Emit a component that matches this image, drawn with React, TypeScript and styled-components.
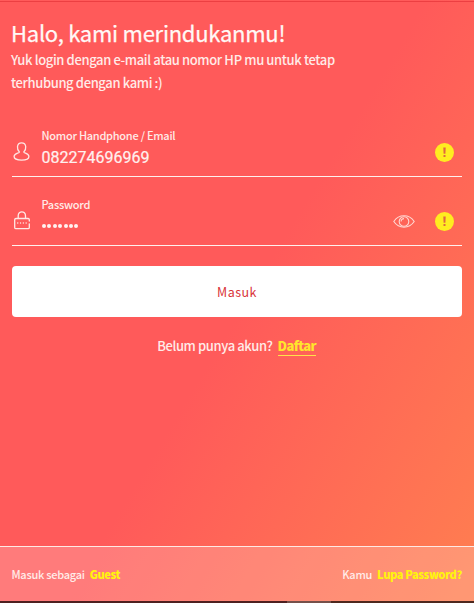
import React from 'react';
import styled, { createGlobalStyle } from 'styled-components';

const GlobalStyle = createGlobalStyle`
  * { box-sizing: border-box; }
  body { margin: 0; overflow: hidden; }
`;

const Screen = styled.div`
  width: 474px;
  height: 603px;
  display: flex;
  flex-direction: column;
  color: #ffebe8;
  font-family: "Noto Sans CJK SC", "Noto Sans", sans-serif;
  background: linear-gradient(121deg, #ff5a5a 0%, #ff5a5a 51%, #ff7f50 100%);
`;

const TopEdge = styled.div`
  height: 2px;
  flex: none;
  border-bottom: 1px solid #ec3f42;
`;

const Content = styled.main`
  flex: 1;
  padding: 16px 12px 0;
`;

const Title = styled.h1`
  margin: 0 0 1px -1px;
  font-size: 22px;
  line-height: 29px;
  font-weight: 400;
  letter-spacing: -0.26px;
  color: #fff8f6;
  -webkit-text-stroke: 0.25px #fff8f6;
  white-space: nowrap;
`;

const Intro = styled.p`
  margin: 0 0 14px -1px;
  font-size: 13px;
  line-height: 23px;
  font-weight: 500;
  letter-spacing: -0.37px;
  white-space: nowrap;
`;

const Field = styled.div`
  height: 69px;
  display: flex;
  align-items: flex-start;
  padding-top: 18px;
  border-bottom: 1px solid #fff0ee;
`;

const FieldIcon = styled.div`
  width: 29.5px;
  height: 22px;
  margin-top: 15px;
  flex: none;
`;

const FieldBody = styled.div`
  flex: 1;
  display: flex;
  flex-direction: column;
`;

const Label = styled.label`
  font-size: 11px;
  line-height: 18px;
  font-weight: 500;
  letter-spacing: -0.26px;
`;

const Phone = styled.div`
  font-family: Roboto, sans-serif;
  font-size: 16px;
  line-height: 22px;
  padding-top: 3px;
  color: #fff1ef;
  -webkit-text-stroke: 0.2px #fff1ef;
`;

const Dots = styled.div`
  display: flex;
  gap: 1.4px;
  padding: 11px 0 0 0.5px;
`;

const Dot = styled.span`
  width: 4px;
  height: 4px;
  border-radius: 50%;
  background: #fff3f1;
`;

const Actions = styled.div`
  display: flex;
  align-items: center;
  gap: 20px;
  padding: 16px 8px 0 0;
`;

const Submit = styled.button`
  display: block;
  width: 450px;
  height: 51px;
  margin: 20px 0 0;
  padding: 0;
  border: 0;
  border-radius: 4px;
  background: #fff;
  color: #d93338;
  font-family: inherit;
  font-size: 12.5px;
  line-height: 50px;
  letter-spacing: 0.5px;
`;

const Register = styled.div`
  display: flex;
  justify-content: center;
  margin: 19px 1px 0 0;
  gap: 5px;
  font-size: 13px;
  line-height: 19px;
  font-weight: 500;
  letter-spacing: -0.38px;
`;

const RegisterLink = styled.a`
  height: 20px;
  font-weight: 900;
  color: #ffe52c;
  border-bottom: 1px solid #ffe24a;
  letter-spacing: -0.6px;
`;

const Footer = styled.footer`
  height: 55px;
  flex: none;
  display: flex;
  justify-content: space-between;
  align-items: center;
  padding: 0 12px 0 11.5px;
  border-top: 1px solid #ffe9e4;
  background: rgba(255, 255, 255, 0.2);
  background-clip: padding-box;
  font-size: 11px;
  line-height: 16px;
  font-weight: 500;
`;

const FooterItem = styled.div`
  display: flex;
  gap: 5px;
  letter-spacing: -0.26px;
`;

const FooterLink = styled.a`
  font-weight: 900;
  color: #fff40c;
  letter-spacing: -0.35px;
`;

const BottomEdge = styled.div`
  height: 2px;
  flex: none;
  background: linear-gradient(90deg, #4d2020 0 287px, #75504a 287px 331px, #4d281e 331px);
`;

const UserIcon = () => (
  <svg width="20" height="22" viewBox="0 0 20 22" fill="none" stroke="#ffe5e2" strokeWidth="1.3">
    <path d="M7.4 10.9C4.7 8.5 4.3 1.8 9.6 1.8s4.9 6.7 2.2 9.1c0 1.3 5.1 1.4 5.1 4.5 0 2.5-3.2 3.7-7.3 3.7s-7.5-1.2-7.5-3.7c0-3.1 5.3-3.2 5.3-4.5z" />
  </svg>
);

const LockIcon = () => (
  <svg width="20" height="22" viewBox="0 0 20 22" fill="none" stroke="#ffe8e5" strokeWidth="1.3" strokeLinecap="round">
    <path d="M6.2 8.6V5.7C6.2.6 13.5.6 13.5 5.7v2.9M17.3 11V9.7c0-.7-.5-1.2-1.2-1.2H4c-.8 0-1.3.5-1.3 1.2v7.7c0 .8.5 1.2 1.3 1.2h12.1c.8 0 1.2-.5 1.2-1.2v-3.6" />
    <path d="M5.7 13h.1M8.5 13h.1M11.3 13h.1M14.1 13h.1" />
  </svg>
);

const EyeIcon = () => (
  <svg width="22" height="20" viewBox="0 0 22 20" fill="none" stroke="#ffd7d1" strokeWidth="1.1">
    <path d="M.8 10.5C6 2.9 16 2.9 21.2 10.5 16 18.1 6 18.1.8 10.5z" />
    <circle cx="11" cy="10.5" r="4.8" />
    <path d="M8.1 10.5c0-1.8 1.1-2.9 2.9-2.9" />
  </svg>
);

const WarningIcon = () => (
  <svg width="19" height="20" viewBox="0 0 19 20">
    <circle cx="9.5" cy="10.5" r="9.5" fill="#ffec20" />
    <path d="M8.3 5.5h2.4l-.3 6.2H8.6zM8.5 13h2v1.9h-2z" fill="#df6840" />
  </svg>
);

export default function App() {
  return (
    <>
      <GlobalStyle />
      <Screen>
        <TopEdge />
        <Content>
          <Title>Halo, kami merindukanmu!</Title>
          <Intro>
            Yuk login dengan e-mail atau nomor HP mu untuk tetap
            <br />
            terhubung dengan kami :)
          </Intro>
          <Field>
            <FieldIcon><UserIcon /></FieldIcon>
            <FieldBody>
              <Label>Nomor Handphone / Email</Label>
              <Phone>082274696969</Phone>
            </FieldBody>
            <Actions><WarningIcon /></Actions>
          </Field>
          <Field>
            <FieldIcon><LockIcon /></FieldIcon>
            <FieldBody>
              <Label>Password</Label>
              <Dots>
                {Array.from({ length: 7 }, (_, i) => <Dot key={i} />)}
              </Dots>
            </FieldBody>
            <Actions><EyeIcon /><WarningIcon /></Actions>
          </Field>
          <Submit>Masuk</Submit>
          <Register>
            <span>Belum punya akun?</span>
            <RegisterLink>Daftar</RegisterLink>
          </Register>
        </Content>
        <Footer>
          <FooterItem><span>Masuk sebagai</span><FooterLink>Guest</FooterLink></FooterItem>
          <FooterItem><span>Kamu</span><FooterLink>Lupa Password?</FooterLink></FooterItem>
        </Footer>
        <BottomEdge />
      </Screen>
    </>
  );
}
